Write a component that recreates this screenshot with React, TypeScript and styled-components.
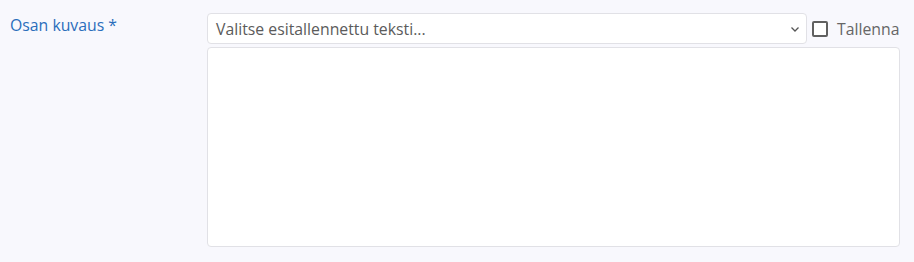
import styled, { createGlobalStyle } from "styled-components";

const GlobalStyle = createGlobalStyle`
  html, body {
    margin: 0;
    padding: 0;
    background: #f8f8fd;
  }
  body {
    font-family: "Open Sans", "Noto Sans", sans-serif;
  }
`;

const Row = styled.div`
  display: grid;
  grid-template-columns: 207px 1fr;
  padding: 13px 14px 15px 0;
  min-height: 262px;
  box-sizing: border-box;
`;

const Label = styled.label`
  padding: 1px 0 0 10px;
  font-size: 15.8px;
  line-height: 22px;
  color: #2a6ebb;
`;

const Fields = styled.div`
  display: flex;
  flex-direction: column;
  gap: 3px;
`;

const TopLine = styled.div`
  display: flex;
  align-items: center;
  gap: 5px;
`;

const SelectBox = styled.div`
  position: relative;
  width: 600px;
  height: 31px;
  box-sizing: border-box;
  border: 1px solid #e1e1e6;
  border-radius: 4px;
  background: #fff;
  display: flex;
  align-items: center;
  padding: 0 24px 0 8px;
  font-size: 15.8px;
  color: #5b5b5b;
`;

const Chevron = styled.svg`
  position: absolute;
  right: 6px;
  top: 11px;
`;

const CheckLabel = styled.label`
  display: flex;
  align-items: center;
  gap: 9px;
  font-size: 15.8px;
  color: #666;
`;

const Box = styled.span`
  width: 16px;
  height: 16px;
  box-sizing: border-box;
  border: 2px solid #606060;
  border-radius: 2px;
  background: #fff;
`;

const TextArea = styled.div`
  height: 200px;
  box-sizing: border-box;
  border: 1px solid #e1e1e6;
  border-radius: 4px;
  background: #fff;
`;

export default function App() {
  return (
    <>
      <GlobalStyle />
      <Row>
        <Label>Osan kuvaus *</Label>
        <Fields>
          <TopLine>
            <SelectBox>
              Valitse esitallennettu teksti...
              <Chevron width="10" height="8" viewBox="0 0 10 8">
                <path d="M1.5 2.5 L5 6 L8.5 2.5" fill="none" stroke="#555" strokeWidth="1.3" />
              </Chevron>
            </SelectBox>
            <CheckLabel>
              <Box />
              Tallenna
            </CheckLabel>
          </TopLine>
          <TextArea />
        </Fields>
      </Row>
    </>
  );
}
